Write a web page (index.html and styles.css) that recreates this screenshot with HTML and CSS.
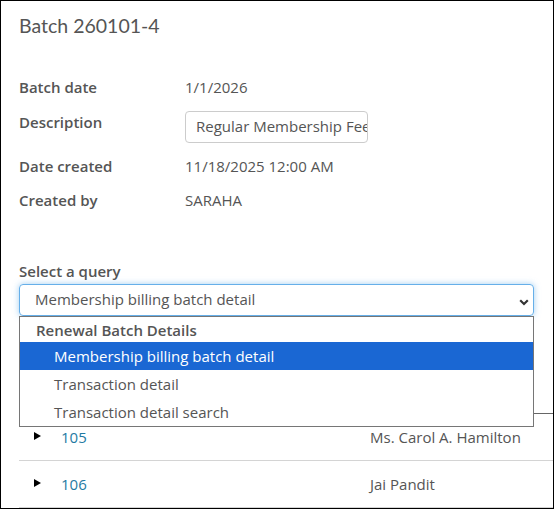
FILE: index.html
```html
<!DOCTYPE html>
<html>
<head>
<meta charset="utf-8">
<link rel="stylesheet" href="styles.css">
</head>
<body>
<div class="frame">
  <h1 class="title">Batch 260101-4</h1>
  <div class="details">
    <div class="label">Batch date</div>
    <div class="value">1/1/2026</div>
    <div class="label desc">Description</div>
    <div class="value"><div class="input">Regular Membership Fees</div></div>
    <div class="label">Date created</div>
    <div class="value">11/18/2025 12:00 AM</div>
    <div class="label">Created by</div>
    <div class="value">SARAHA</div>
  </div>
  <div class="query">
    <div class="label">Select a query</div>
    <div class="select-wrap">
      <div class="select">
        <span>Membership billing batch detail</span>
        <svg class="chev" width="10" height="7" viewBox="0 0 10 7"><path d="M1.2 1.3 L5 5 L8.8 1.3" fill="none" stroke="#333" stroke-width="2.2"/></svg>
      </div>
      <div class="dropdown">
        <div class="group">Renewal Batch Details</div>
        <div class="opt selected">Membership billing batch detail</div>
        <div class="opt">Transaction detail</div>
        <div class="opt">Transaction detail search</div>
      </div>
    </div>
  </div>
  <div class="table">
    <div class="thead"></div>
    <div class="row">
      <span class="tri"></span>
      <a class="id">105</a>
      <span class="name">Ms. Carol A. Hamilton</span>
    </div>
    <div class="row">
      <span class="tri"></span>
      <a class="id">106</a>
      <span class="name">Jai Pandit</span>
    </div>
  </div>
</div>
</body>
</html>
```

FILE: styles.css
```css
html, body {
  margin: 0;
  padding: 0;
  background: #fff;
}
.frame {
  box-sizing: border-box;
  width: 554px;
  height: 509px;
  border: 1px solid #000;
  overflow: hidden;
  padding: 0 0 0 18px;
  font-family: "Open Sans", "Liberation Sans", sans-serif;
  font-size: 15px;
  line-height: 21px;
  color: #555;
}
.title {
  margin: 10px 0 0;
  font-family: "Lato", "Open Sans", sans-serif;
  font-weight: 400;
  font-size: 19.5px;
  line-height: 30px;
  color: #555;
}
.details {
  margin-top: 36px;
  display: grid;
  grid-template-columns: 166px auto;
  row-gap: 13px;
}
.label {
  font-weight: 600;
  color: #555;
}
.label.desc {
  padding-top: 1px;
}
.value {
  color: #555;
}
.input {
  box-sizing: border-box;
  width: 183px;
  height: 32px;
  border: 1px solid #ccc;
  border-radius: 4px;
  padding: 4px 0 0 10px;
  white-space: nowrap;
  overflow: hidden;
}
.query {
  margin-top: 50px;
}
.select-wrap {
  position: relative;
  margin-top: 2px;
  width: 515px;
}
.select {
  box-sizing: border-box;
  height: 32px;
  border: 1px solid #66afe9;
  border-radius: 4px;
  box-shadow: 0 0 6px rgba(102,175,233,.6);
  padding: 4px 0 0 15px;
  display: flex;
  justify-content: space-between;
}
.chev {
  margin: 10px 4px 0 0;
}
.dropdown {
  position: absolute;
  left: 0;
  top: 32px;
  width: 515px;
  box-sizing: border-box;
  border: 1px solid #767676;
  background: #fff;
  z-index: 2;
}
.group {
  height: 25px;
  padding: 3px 0 0 16px;
  box-sizing: border-box;
  font-weight: 600;
  line-height: 21px;
}
.opt {
  height: 28px;
  box-sizing: border-box;
  padding: 3px 0 0 34px;
  line-height: 22px;
}
.opt.selected {
  background: #1a67d3;
  color: #fff;
}
.table {
  margin-top: 97px;
  width: 560px;
}
.thead {
  border-bottom: 1px solid #666;
}
.row {
  height: 46px;
  border-bottom: 1px solid #d4d4d4;
  display: flex;
  align-items: center;
}
.tri {
  width: 0;
  height: 0;
  border-top: 4px solid transparent;
  border-bottom: 4px solid transparent;
  border-left: 7px solid #000;
  margin: 0 0 2px 15px;
}
.id {
  margin-left: 20px;
  width: 309px;
  color: #1f7ba3;
}
.name {
  color: #555;
}
```
